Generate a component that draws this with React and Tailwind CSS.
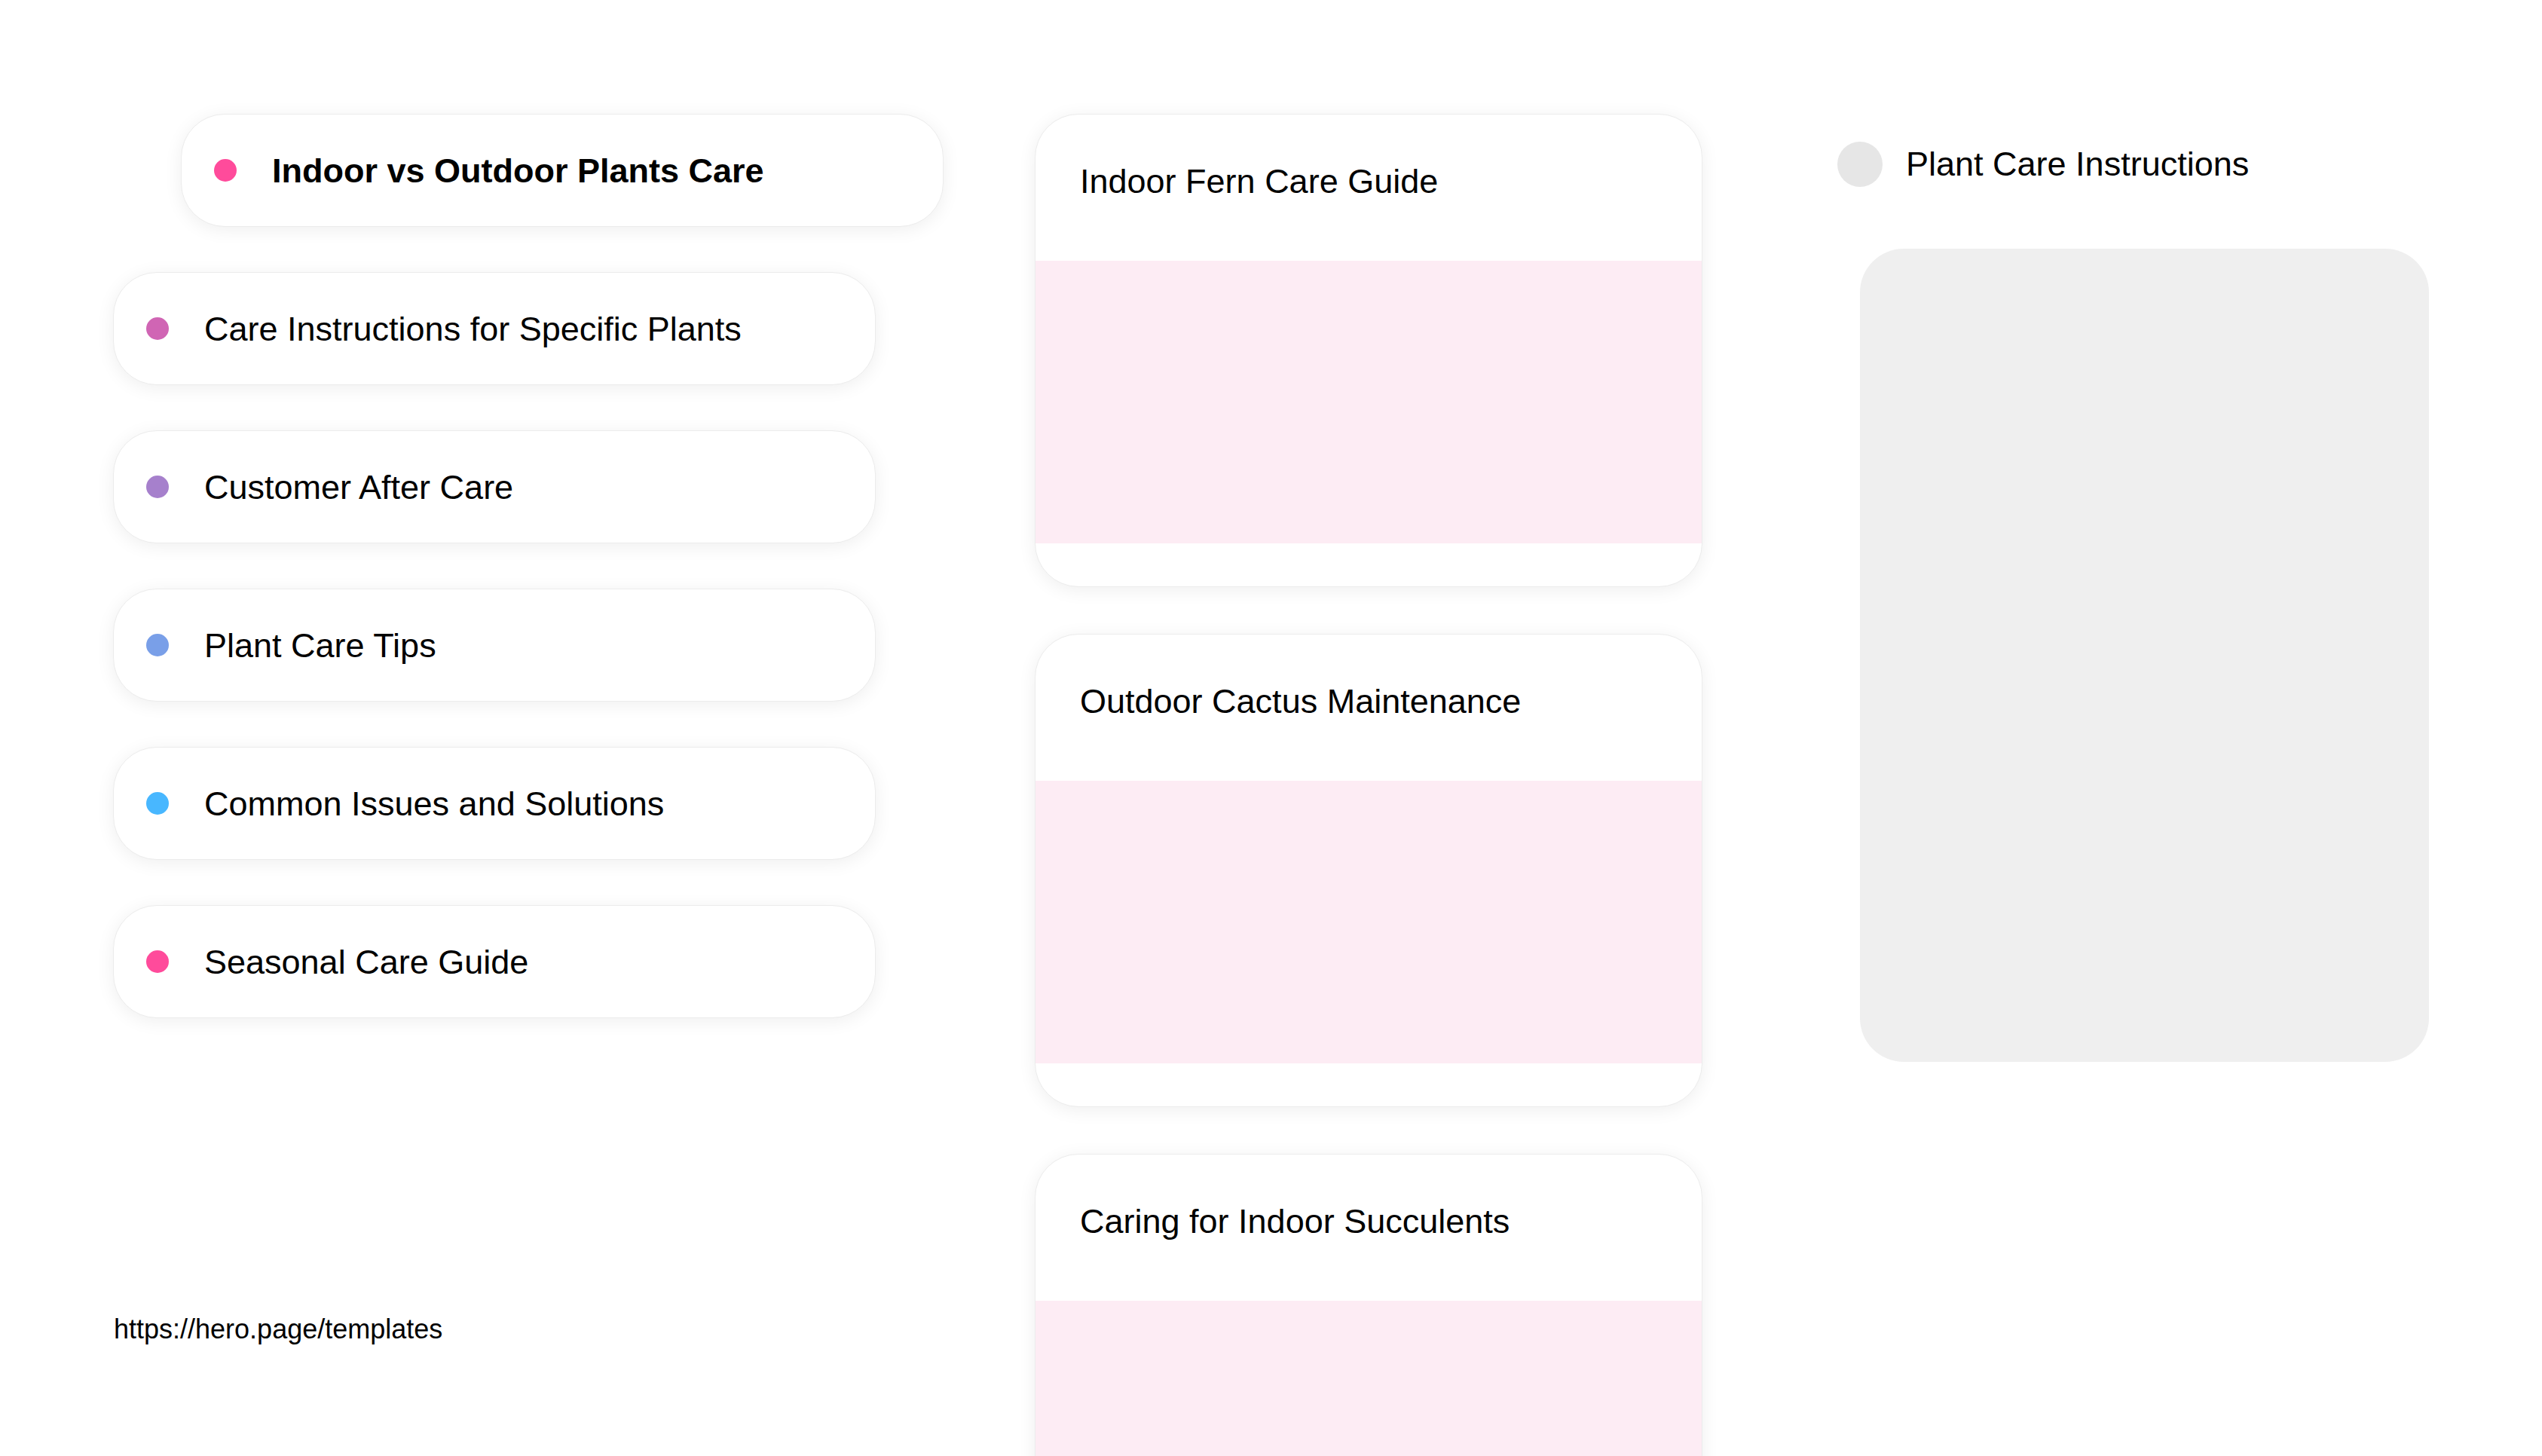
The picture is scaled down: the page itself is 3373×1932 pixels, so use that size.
import React from "react";

const items = [
  { label: "Indoor vs Outdoor Plants Care", color: "bg-[#ff4b9b]", active: true },
  { label: "Care Instructions for Specific Plants", color: "bg-[#d065b4]" },
  { label: "Customer After Care", color: "bg-[#a680cc]" },
  { label: "Plant Care Tips", color: "bg-[#799fe8]" },
  { label: "Common Issues and Solutions", color: "bg-[#48b7ff]" },
  { label: "Seasonal Care Guide", color: "bg-[#ff4b9b]" },
];

const cards = ["Indoor Fern Care Guide", "Outdoor Cactus Maintenance", "Caring for Indoor Succulents"];

export default function App() {
  return (
    <div
      className="w-[3373px] h-[1932px] overflow-hidden bg-white text-black flex pt-[151px] pl-[150px]"
      style={{ fontFamily: '"Liberation Sans", Arial, sans-serif' }}
    >
      {/* Left column */}
      <div className="w-[1102px] shrink-0 flex flex-col">
        <div className="flex flex-col gap-[60px]">
          {items.map((it) => (
            <div
              key={it.label}
              className={`w-[1012px] h-[150px] rounded-[58px] bg-white border border-[#ececec] shadow-[0_4px_24px_rgba(0,0,0,0.065)] flex items-center pl-[43px] gap-[47px] ${
                it.active ? "ml-[90px]" : ""
              }`}
            >
              <span className={`w-[30px] h-[30px] rounded-full shrink-0 ${it.color}`} />
              <span className={`text-[45px] leading-none ${it.active ? "font-bold" : ""}`}>{it.label}</span>
            </div>
          ))}
        </div>
        <div className="mt-[392px] text-[36px] leading-[41px] pl-[1px]">https://hero.page/templates</div>
      </div>

      {/* Middle column */}
      <div className="ml-[121px] w-[886px] shrink-0 flex flex-col gap-[62px]">
        {cards.map((c) => (
          <div
            key={c}
            className="h-[628px] shrink-0 rounded-[58px] bg-white border border-[#ececec] shadow-[0_4px_24px_rgba(0,0,0,0.065)] overflow-hidden flex flex-col"
          >
            <div className="h-[194px] shrink-0 pt-[63px] px-[59px] text-[45px] leading-[52px]">{c}</div>
            <div className="h-[375px] shrink-0 bg-[#fdecf4]" />
          </div>
        ))}
      </div>

      {/* Right column */}
      <div className="ml-[179px] w-[785px] shrink-0 flex flex-col pt-[37px]">
        <div className="flex items-center gap-[31px]">
          <span className="w-[60px] h-[60px] rounded-full bg-[#e6e6e6] shrink-0" />
          <span className="text-[45px] leading-[52px]">Plant Care Instructions</span>
        </div>
        <div className="ml-[30px] mt-[82px] w-[755px] h-[1079px] rounded-[58px] bg-[#efefef]" />
      </div>
    </div>
  );
}
